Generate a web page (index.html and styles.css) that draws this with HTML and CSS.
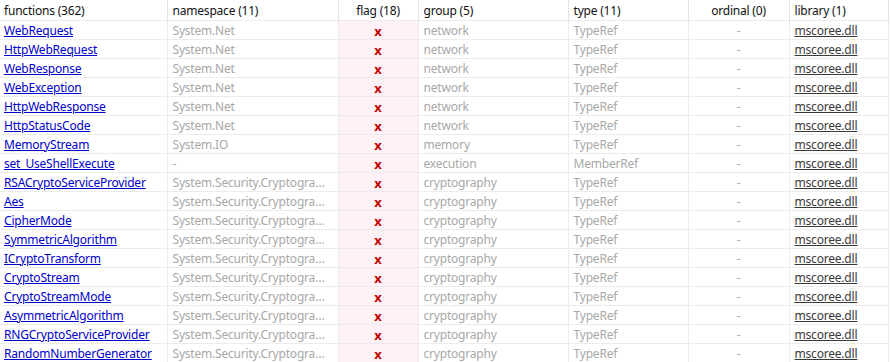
FILE: index.html
```html
<!DOCTYPE html>
<html>
<head>
<meta charset="utf-8">
<link rel="stylesheet" href="styles.css">
</head>
<body>
<div class="wrap">
<table class="grid">
<colgroup>
<col class="c-fn"><col class="c-ns"><col class="c-flag"><col class="c-grp"><col class="c-type"><col class="c-ord"><col class="c-lib">
</colgroup>
<thead>
<tr>
<th>functions (362)</th><th>namespace (11)</th><th class="center">flag (18)</th><th>group (5)</th><th>type (11)</th><th class="center">ordinal (0)</th><th>library (1)</th>
</tr>
</thead>
<tbody>
<tr><td><a class="fn" href="#">WebRequest</a></td><td class="dim">System.Net</td><td class="flag">x</td><td class="dim">network</td><td class="dim">TypeRef</td><td class="dim center">-</td><td><a class="lib" href="#">mscoree.dll</a></td></tr>
<tr><td><a class="fn" href="#">HttpWebRequest</a></td><td class="dim">System.Net</td><td class="flag">x</td><td class="dim">network</td><td class="dim">TypeRef</td><td class="dim center">-</td><td><a class="lib" href="#">mscoree.dll</a></td></tr>
<tr><td><a class="fn" href="#">WebResponse</a></td><td class="dim">System.Net</td><td class="flag">x</td><td class="dim">network</td><td class="dim">TypeRef</td><td class="dim center">-</td><td><a class="lib" href="#">mscoree.dll</a></td></tr>
<tr><td><a class="fn" href="#">WebException</a></td><td class="dim">System.Net</td><td class="flag">x</td><td class="dim">network</td><td class="dim">TypeRef</td><td class="dim center">-</td><td><a class="lib" href="#">mscoree.dll</a></td></tr>
<tr><td><a class="fn" href="#">HttpWebResponse</a></td><td class="dim">System.Net</td><td class="flag">x</td><td class="dim">network</td><td class="dim">TypeRef</td><td class="dim center">-</td><td><a class="lib" href="#">mscoree.dll</a></td></tr>
<tr><td><a class="fn" href="#">HttpStatusCode</a></td><td class="dim">System.Net</td><td class="flag">x</td><td class="dim">network</td><td class="dim">TypeRef</td><td class="dim center">-</td><td><a class="lib" href="#">mscoree.dll</a></td></tr>
<tr><td><a class="fn" href="#">MemoryStream</a></td><td class="dim">System.IO</td><td class="flag">x</td><td class="dim">memory</td><td class="dim">TypeRef</td><td class="dim center">-</td><td><a class="lib" href="#">mscoree.dll</a></td></tr>
<tr><td><a class="fn" href="#">set_UseShellExecute</a></td><td class="dim">-</td><td class="flag">x</td><td class="dim">execution</td><td class="dim">MemberRef</td><td class="dim center">-</td><td><a class="lib" href="#">mscoree.dll</a></td></tr>
<tr><td><a class="fn" href="#">RSACryptoServiceProvider</a></td><td class="dim ns">System.Security.Cryptography</td><td class="flag">x</td><td class="dim">cryptography</td><td class="dim">TypeRef</td><td class="dim center">-</td><td><a class="lib" href="#">mscoree.dll</a></td></tr>
<tr><td><a class="fn" href="#">Aes</a></td><td class="dim ns">System.Security.Cryptography</td><td class="flag">x</td><td class="dim">cryptography</td><td class="dim">TypeRef</td><td class="dim center">-</td><td><a class="lib" href="#">mscoree.dll</a></td></tr>
<tr><td><a class="fn" href="#">CipherMode</a></td><td class="dim ns">System.Security.Cryptography</td><td class="flag">x</td><td class="dim">cryptography</td><td class="dim">TypeRef</td><td class="dim center">-</td><td><a class="lib" href="#">mscoree.dll</a></td></tr>
<tr><td><a class="fn" href="#">SymmetricAlgorithm</a></td><td class="dim ns">System.Security.Cryptography</td><td class="flag">x</td><td class="dim">cryptography</td><td class="dim">TypeRef</td><td class="dim center">-</td><td><a class="lib" href="#">mscoree.dll</a></td></tr>
<tr><td><a class="fn" href="#">ICryptoTransform</a></td><td class="dim ns">System.Security.Cryptography</td><td class="flag">x</td><td class="dim">cryptography</td><td class="dim">TypeRef</td><td class="dim center">-</td><td><a class="lib" href="#">mscoree.dll</a></td></tr>
<tr><td><a class="fn" href="#">CryptoStream</a></td><td class="dim ns">System.Security.Cryptography</td><td class="flag">x</td><td class="dim">cryptography</td><td class="dim">TypeRef</td><td class="dim center">-</td><td><a class="lib" href="#">mscoree.dll</a></td></tr>
<tr><td><a class="fn" href="#">CryptoStreamMode</a></td><td class="dim ns">System.Security.Cryptography</td><td class="flag">x</td><td class="dim">cryptography</td><td class="dim">TypeRef</td><td class="dim center">-</td><td><a class="lib" href="#">mscoree.dll</a></td></tr>
<tr><td><a class="fn" href="#">AsymmetricAlgorithm</a></td><td class="dim ns">System.Security.Cryptography</td><td class="flag">x</td><td class="dim">cryptography</td><td class="dim">TypeRef</td><td class="dim center">-</td><td><a class="lib" href="#">mscoree.dll</a></td></tr>
<tr><td><a class="fn" href="#">RNGCryptoServiceProvider</a></td><td class="dim ns">System.Security.Cryptography</td><td class="flag">x</td><td class="dim">cryptography</td><td class="dim">TypeRef</td><td class="dim center">-</td><td><a class="lib" href="#">mscoree.dll</a></td></tr>
<tr><td><a class="fn" href="#">RandomNumberGenerator</a></td><td class="dim ns">System.Security.Cryptography</td><td class="flag">x</td><td class="dim">cryptography</td><td class="dim">TypeRef</td><td class="dim center">-</td><td><a class="lib" href="#">mscoree.dll</a></td></tr>
</tbody>
</table>
</div>
</body>
</html>
```
FILE: styles.css
```css
html, body {
  margin: 0;
  padding: 0;
  background: #fff;
}
body {
  font-family: "Noto Sans", "Open Sans", sans-serif;
  font-size: 12px;
  letter-spacing: -0.2px;
  color: #000;
}
.wrap {
  width: 891px;
  height: 362px;
  overflow: hidden;
}
.grid {
  border-collapse: collapse;
  table-layout: fixed;
  width: 888px;
}
.c-fn { width: 167px; }
.c-ns { width: 171px; }
.c-flag { width: 80px; }
.c-grp { width: 150px; }
.c-type { width: 120px; }
.c-ord { width: 101px; }
.c-lib { width: 99px; }

th {
  padding: 1px 5px 0;
  line-height: 19px;
  font-weight: normal;
  text-align: left;
  color: #111;
  border-left: 1px solid #e2e2e2;
  border-right: 1px solid #e2e2e2;
  white-space: nowrap;
  overflow: hidden;
  vertical-align: middle;
}
th:first-child { border-left: none; padding-left: 4px; }
td {
  padding: 2px 5px 0;
  line-height: 16px;
  border: 1px solid #ececec;
  border-top: none;
  white-space: nowrap;
  overflow: hidden;
  text-overflow: ellipsis;
  vertical-align: middle;
}
td:first-child { border-left: none; padding-left: 4px; }
tbody tr:first-child td { border-top: 1px solid #ececec; }
.ns { padding-right: 7px; }
.center { text-align: center; }
.dim { color: #a8a8a8; }
.fn { color: #0000cc; text-decoration: underline; }
.lib { color: #3a3a3a; text-decoration: underline; }
.flag {
  background: #fff2f7;
  color: #c00000;
  font-weight: bold;
  font-size: 13px;
  text-align: center;
}
```
